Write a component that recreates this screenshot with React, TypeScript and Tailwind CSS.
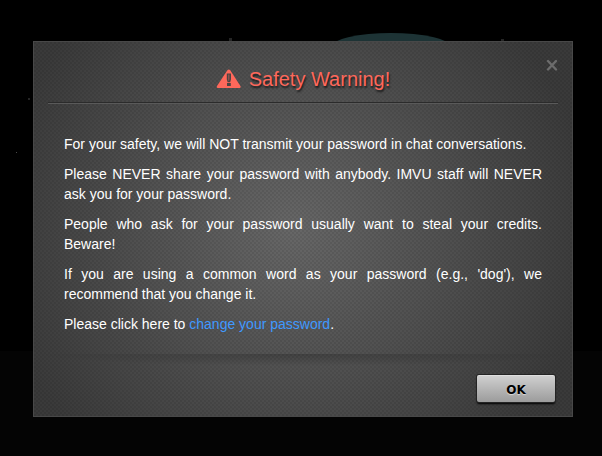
import React from "react";

function WarningIcon() {
  return (
    <svg width="25" height="20" viewBox="0 0 25 20" aria-hidden="true">
      <path
        d="M11.2 1.4Q12.8-.4 14.4 1.4L24.4 17Q25.2 18.8 23.8 19H1.8Q.2 18.8 1 17Z"
        fill="#fe685b"
      />
      <path d="M10.8 4.6h4.2v5.6l-.8 3h-2.6l-.8-3zM11 14h3.8v3h-3.8z" fill="#4b4443" />
      <path d="M12.2 5.4h1.2v4.6l-.4 2h-.4l-.4-2z" fill="#a0564e" />
    </svg>
  );
}

function CloseIcon() {
  return (
    <svg width="12" height="12" viewBox="0 0 12 12" aria-hidden="true">
      <path d="M2 2l8 8.5M10 2l-8 8.5" stroke="#6c6c6c" strokeWidth="2.4" strokeLinecap="round" />
    </svg>
  );
}

function SceneBackdrop() {
  return (
    <svg className="absolute inset-0 size-full" aria-hidden="true">
      <rect y="351" width="100%" height="100%" fill="#040404" />
      <ellipse cx="391" cy="47" rx="59" ry="14" fill="#1d3335" />
      <path d="M229 38h3v4h-3zM501 39h3v3h-3zM28 98h2v2h-2z" fill="#252525" />
      <path d="M16 152h1v1h-1z" fill="#4a4a4a" />
    </svg>
  );
}

export default function App() {
  return (
    <main className="relative min-h-screen bg-black pt-[41px] pr-[29px] pb-[39px] pl-[33px] font-['Liberation_Sans',Arial,sans-serif]">
      <SceneBackdrop />
      <section
        role="dialog"
        aria-labelledby="dialog-title"
        className="relative flex flex-col border border-[#484848] bg-[radial-gradient(circle_at_1px_1px,#00000014_1px,transparent_1px),radial-gradient(circle_at_3px_3px,#00000014_1px,transparent_1px),radial-gradient(ellipse_56%_78%_at_48%_50%,#676767,#3a3a3a)] bg-[length:4px_4px,4px_4px,100%_100%]"
      >
        <button
          type="button"
          aria-label="Close"
          className="absolute top-[17px] right-[14px] cursor-pointer"
        >
          <CloseIcon />
        </button>
        <header className="mx-[14px] flex h-[61px] items-center justify-center gap-2 border-b border-[#2b2b2b] pt-[14px] shadow-[0_1px_0_#5a5a5a]">
          <WarningIcon />
          <h1
            id="dialog-title"
            className="text-[20px] leading-6 text-[#fe685b] [text-shadow:1px_2px_2px_#000000b0]"
          >
            Safety Warning!
          </h1>
        </header>
        <div className="flex flex-col gap-[10px] px-[30px] pt-[31px] pb-5 text-justify text-[14px] leading-5 text-white">
          <p>For your safety, we will NOT transmit your password in chat conversations.</p>
          <p>
            Please NEVER share your password with anybody. IMVU staff will NEVER ask you for your
            password.
          </p>
          <p>People who ask for your password usually want to steal your credits. Beware!</p>
          <p>
            If you are using a common word as your password (e.g., 'dog'), we recommend that you
            change it.
          </p>
          <p>
            Please click here to{" "}
            <a href="#change-password" className="text-[#3f99ff]">
              change your password
            </a>
            .
          </p>
        </div>
        <footer className="flex justify-end bg-[radial-gradient(ellipse_50%_12px_at_50%_0px,#00000038,transparent)] pt-[21px] pr-[17px] pb-[14px]">
          <button
            type="button"
            className="h-[27px] w-[78px] cursor-pointer rounded-[2px] border-t border-[#dedede] bg-linear-to-b from-[#cfcfcf] to-[#9c9c9c] pt-[2px] font-['DejaVu_Sans',sans-serif] text-[12px] leading-4 font-bold text-black shadow-[0_0_0_1px_#242424,0_2px_2px_#000000] [text-shadow:0_1px_1px_#ffffff90]"
          >
            OK
          </button>
        </footer>
      </section>
    </main>
  );
}
